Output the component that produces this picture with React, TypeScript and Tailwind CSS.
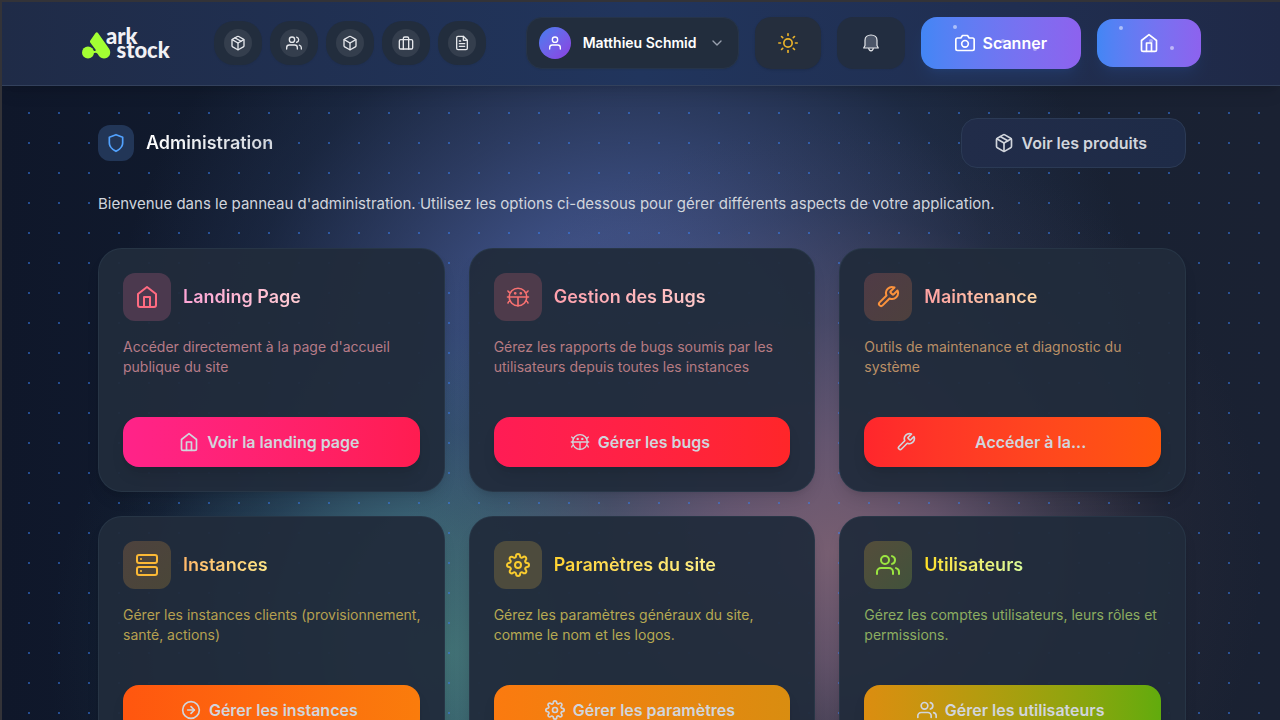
import React from 'react';
import {
  FiArrowRightCircle, FiBox, FiBriefcase, FiCamera, FiChevronDown, FiFileText,
  FiHome, FiPackage, FiServer, FiSettings, FiShield, FiSun, FiTool, FiUser, FiUsers
} from 'react-icons/fi';

interface IconProps {
  className?: string;
}

interface AdminCard {
  title: string;
  description: string;
  action: string;
  icon: React.ComponentType<IconProps>;
  actionIcon: React.ComponentType<IconProps>;
  tile: string;
  heading: string;
  text: string;
  button: string;
  spread?: boolean;
}

const BugIcon: React.FC<IconProps> = ({ className }) => (
  <svg viewBox="0 0 24 24" fill="none" stroke="currentColor" strokeWidth="1.6" strokeLinecap="round" className={className}>
    <circle cx="12" cy="12" r="8.800" />
    <path d="M1.500 12h21M12 12.500V21M4.500 7.500C3.200 7.500 2.400 7 2 6M19.500 7.500c1.300 0 2.100-.5 2.500-1.500M4.300 16c-1.300 0-2 .7-2.300 2M19.700 16c1.300 0 2 .7 2.300 2" />
    <circle cx="9.200" cy="8.300" r=".6" fill="currentColor" />
    <circle cx="14.800" cy="8.300" r=".6" fill="currentColor" />
  </svg>
);

const BellIcon: React.FC<IconProps> = ({ className }) => (
  <svg viewBox="0 0 16 18" fill="none" stroke="currentColor" strokeWidth="1.2" strokeLinejoin="round" className={className}>
    <path d="M8 1C4.300 1 2 3.300 2 6.200V11.500L.7 14h14.600L14 11.500V6.200C14 3.300 11.700 1 8 1Z" fill="#4b5568" />
    <path d="M5.600 14.200c.3 1.700 1.200 2.600 2.400 2.600s2.100-.9 2.400-2.600" />
  </svg>
);

const Logo = () => (
  <a href="#" aria-label="Ark stock" className="flex w-[88px] items-center text-[#f1f1f5]">
    <svg viewBox="0 0 30 28" className="mt-1 h-7 w-[30px] shrink-0 fill-[#a3ff33]">
      <circle cx="6" cy="21.500" r="6" />
      <path d="M8.200 11.500Q7.600 10.500 8.300 9.500L13.500 2Q14.800.6 16 2L27.300 18C30 23 26.500 27.500 22 27.500c-3.500 0-5-2.500-6.500-4.700-1-1.300-2.500-1.300-4.500-.3v-3c1.500 1 3.500.5 2.500-1Z" />
    </svg>
    <span className="-ml-1.5 whitespace-pre font-['Lato',sans-serif] text-[22px] leading-[14px] font-black">
      {'ark\n  stock'}
    </span>
  </a>
);

const navItems = [
  { label: 'Produits', icon: FiPackage },
  { label: 'Clients', icon: FiUsers },
  { label: 'Stock', icon: FiBox },
  { label: 'Dossiers', icon: FiBriefcase },
  { label: 'Documents', icon: FiFileText },
];

const cards: AdminCard[] = [
  {
    title: 'Landing Page',
    description: "Accéder directement à la page d'accueil publique du site",
    action: 'Voir la landing page',
    icon: FiHome,
    actionIcon: FiHome,
    tile: 'bg-[#4b394e] text-[#ff6b81]',
    heading: 'from-pink-300 to-rose-200',
    text: 'text-[#b67b88]',
    button: 'from-[#ff2389] to-[#ff1c50]',
  },
  {
    title: 'Gestion des Bugs',
    description: 'Gérez les rapports de bugs soumis par les utilisateurs depuis toutes les instances',
    action: 'Gérer les bugs',
    icon: BugIcon,
    actionIcon: BugIcon,
    tile: 'bg-[#4e3b4b] text-[#f87171]',
    heading: 'from-rose-300 to-red-200',
    text: 'text-[#b67b82]',
    button: 'from-[#ff1c55] to-[#ff2629]',
  },
  {
    title: 'Maintenance',
    description: 'Outils de maintenance et diagnostic du système',
    action: 'Accéder à la...',
    icon: FiTool,
    actionIcon: FiTool,
    tile: 'bg-gradient-to-br from-[#4f3b46] to-[#4d403d] text-[#fb923c]',
    heading: 'from-red-300 to-orange-200',
    text: 'text-[#ba8f66]',
    button: 'from-[#ff262c] to-[#ff560c]',
    spread: true,
  },
  {
    title: 'Instances',
    description: 'Gérer les instances clients (provisionnement, santé, actions)',
    action: 'Gérer les instances',
    icon: FiServer,
    actionIcon: FiArrowRightCircle,
    tile: 'bg-gradient-to-br from-[#4d423e] to-[#4a4638] text-[#fbb936]',
    heading: 'from-orange-300 to-amber-200',
    text: 'text-[#b6a050]',
    button: 'from-[#ff560f] to-[#fa7c0c]',
  },
  {
    title: 'Paramètres du site',
    description: 'Gérez les paramètres généraux du site, comme le nom et les logos.',
    action: 'Gérer les paramètres',
    icon: FiSettings,
    actionIcon: FiSettings,
    tile: 'bg-[#4d4b3d] text-[#facc2e]',
    heading: 'from-amber-300 to-yellow-200',
    text: 'text-[#b6a952]',
    button: 'from-[#fb7a0f] to-[#d98d10]',
  },
  {
    title: 'Utilisateurs',
    description: 'Gérez les comptes utilisateurs, leurs rôles et permissions.',
    action: 'Gérer les utilisateurs',
    icon: FiUsers,
    actionIcon: FiUsers,
    tile: 'bg-gradient-to-br from-[#544d3b] to-[#41523b] text-[#9be640]',
    heading: 'from-yellow-300 to-lime-200',
    text: 'text-[#8dad60]',
    button: 'from-[#dc8d10] to-[#61ab0d]',
  },
];

const Card: React.FC<{ card: AdminCard }> = ({ card }) => {
  const Icon = card.icon;
  const ActionIcon = card.actionIcon;

  return (
    <article className="flex flex-col rounded-3xl border border-[#2b3a4b]/70 bg-[#212b3b]/95 p-6 shadow-lg">
      <div className="flex items-center gap-3">
        <div className={`flex size-12 shrink-0 items-center justify-center rounded-xl ${card.tile}`}>
          <Icon className="size-6" />
        </div>
        <h2 className={`bg-gradient-to-r bg-clip-text text-lg font-semibold text-transparent ${card.heading}`}>
          {card.title}
        </h2>
      </div>
      <p className={`mt-4 -mr-2 mb-10 text-sm ${card.text}`}>{card.description}</p>
      <button className={`mt-auto flex h-[50px] items-center justify-center gap-2 rounded-2xl bg-gradient-to-r pl-8 font-semibold text-gray-300 shadow-lg ${card.spread ? 'pr-6' : 'pr-9'} ${card.button}`}>
        <ActionIcon className="size-5 shrink-0" />
        <span className={card.spread ? 'flex-1' : ''}>{card.action}</span>
      </button>
    </article>
  );
};

// Layered glows behind the content, with the dot grid on top
const Backdrop = () => (
  <div className="pointer-events-none absolute inset-0 -z-10 overflow-hidden bg-gradient-to-r from-[#0f172a] via-[#152133] to-[#1a2132]">
    <div className="absolute inset-0 bg-[radial-gradient(circle_at_49%_380px,#45599a_0px,#42558de6_150px,#394a7aa6_270px,#2c3e6650_390px,transparent_520px)]" />
    <div className="absolute inset-0 bg-[radial-gradient(circle_at_35%_650px,#43787af2_0px,#3f7078cc_110px,#2f586880_220px,#20405025_320px,transparent_400px)]" />
    <div className="absolute inset-0 bg-[radial-gradient(circle_at_65%_550px,#7b6072f2_0px,#70596ecc_110px,#584a5a80_230px,#40384525_340px,transparent_430px)]" />
    <div className="absolute inset-0 bg-[radial-gradient(circle,#3b82f680_1px,transparent_1.5px)] bg-[length:30px_30px] bg-[position:12px_6px]" />
  </div>
);

const App: React.FC = () => {
  return (
    <div className="relative isolate min-h-screen overflow-hidden border-t-2 border-l-2 border-[#333338] font-['Inter',sans-serif] text-gray-200">
      <Backdrop />

      {/* Header */}
      <header className="flex h-[84px] items-center border-b border-[#33415c] bg-gradient-to-r from-[#1f2b47] via-[#21355d] to-[#1f2947] pr-[79px] pb-0.5 pl-20 shadow-lg">
        <Logo />
        <nav className="ml-11 flex gap-2">
          {navItems.map(({ label, icon: Icon }) => (
            <a key={label} href="#" aria-label={label} className="flex h-11 w-12 items-center justify-center rounded-[20px] bg-[#222d3d] shadow-xs">
              <span className="flex size-7 items-center justify-center rounded-full bg-[#343e4d] text-gray-200">
                <Icon className="size-4" />
              </span>
            </a>
          ))}
        </nav>

        <div className="ml-auto flex items-center gap-4">
          <button className="flex h-[52px] items-center gap-3 rounded-2xl border border-[#26344a] bg-[#222d3d] pr-[13px] pl-3 text-sm font-semibold text-white shadow-xs">
            <span className="flex size-8 items-center justify-center rounded-full bg-gradient-to-br from-[#3f7df0] to-[#8a3de0]">
              <FiUser className="size-4" />
            </span>
            Matthieu Schmid
            <FiChevronDown className="size-4 text-gray-400" />
          </button>
          <button aria-label="Changer de thème" className="flex h-[52px] w-[66px] items-center justify-center rounded-2xl bg-[#252e3d] text-[#eab32a] shadow-sm">
            <FiSun className="size-5" />
          </button>
          <button aria-label="Notifications" className="flex h-[52px] w-[68px] items-center justify-center rounded-2xl bg-[#222d40] text-gray-200 shadow-xs">
            <BellIcon className="h-[18px] w-4" />
          </button>
          <button className="relative flex h-[52px] items-center gap-2 rounded-2xl bg-gradient-to-r from-[#4286f5] to-[#8d62ee] px-[34px] font-semibold text-white shadow-lg shadow-blue-500/10">
            <FiCamera className="size-5" />
            Scanner
            <span className="absolute top-2 left-8 size-1 rounded-full bg-white/50" />
            <span className="absolute top-[22px] left-20 size-1 rounded-full bg-white/40" />
            <span className="absolute top-[30px] left-28 size-1 rounded-full bg-white/40" />
          </button>
          <button aria-label="Accueil" className="relative flex h-12 w-26 items-center justify-center rounded-2xl bg-gradient-to-r from-[#4286f5] to-[#8d62ee] text-white shadow-lg shadow-blue-500/10">
            <FiHome className="size-5" />
            <span className="absolute top-[7px] left-[22px] size-1 rounded-full bg-white/50" />
            <span className="absolute top-5 left-[52px] size-1 rounded-full bg-white/40" />
            <span className="absolute top-[27px] left-[73px] size-1 rounded-full bg-white/50" />
          </button>
        </div>
      </header>

      <main className="pt-8 pr-[94px] pb-16 pl-24">
        <div className="flex items-center justify-between">
          <div className="flex items-center gap-3">
            <div className="flex size-9 items-center justify-center rounded-xl bg-[#223657] text-blue-400">
              <FiShield className="size-5" />
            </div>
            <h1 className="bg-gradient-to-r from-white to-gray-300 bg-clip-text text-lg font-semibold text-transparent">Administration</h1>
          </div>
          <button className="flex h-[50px] items-center gap-2 rounded-2xl border border-[#2b3a55] bg-gradient-to-r from-[#212c49] to-[#1e2b47] pr-[38px] pl-8 font-semibold text-gray-300">
            <FiPackage className="size-5" />
            Voir les produits
          </button>
        </div>

        <p className="mt-6 text-[15px] leading-6 text-gray-300">
          Bienvenue dans le panneau d'administration. Utilisez les options ci-dessous pour gérer différents aspects de votre application.
        </p>

        <section className="mt-8 grid grid-cols-3 gap-6">
          {cards.map((card) => (
            <Card key={card.title} card={card} />
          ))}
        </section>
      </main>
    </div>
  );
};

export default App;
